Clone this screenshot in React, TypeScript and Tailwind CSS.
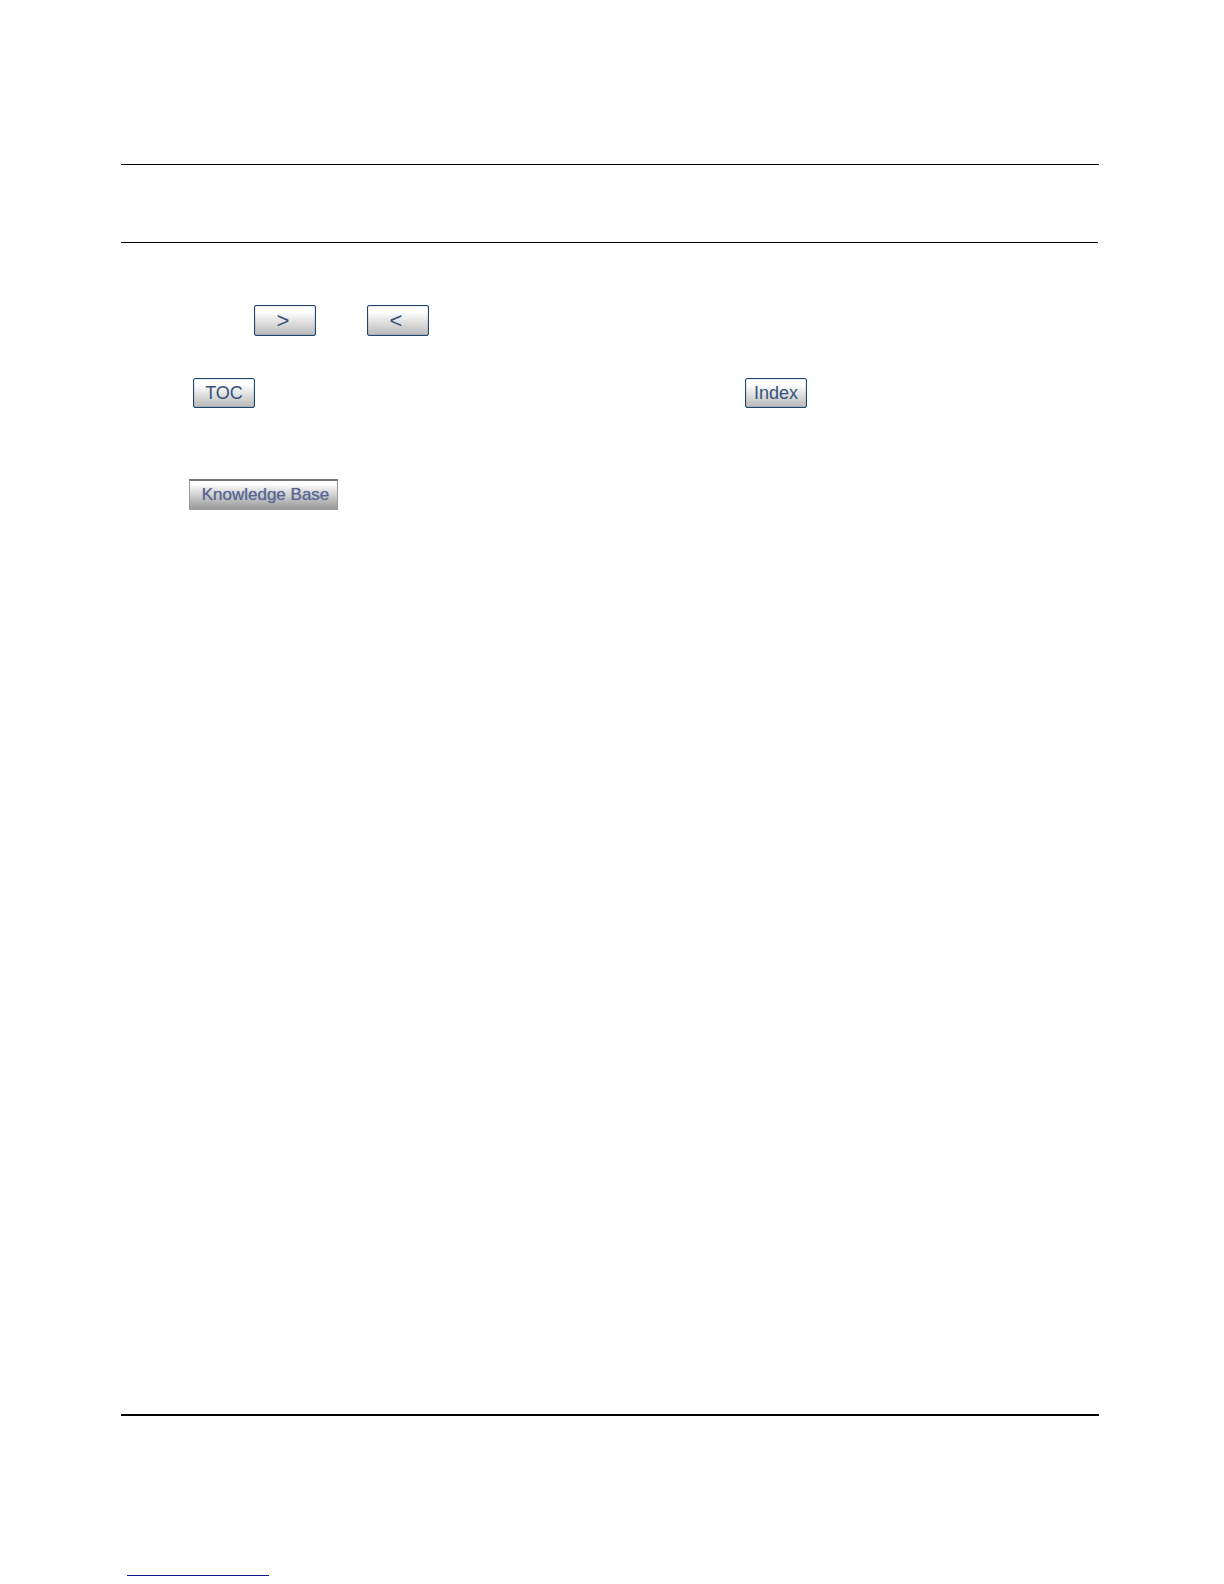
import clsx from "clsx";
import type { ReactNode } from "react";

function NavButton({
  children,
  label,
  className,
}: {
  children: ReactNode;
  label: string;
  className?: string;
}) {
  return (
    <button
      type="button"
      aria-label={label}
      className={clsx(
        "flex w-[62px] items-center justify-center rounded-xs border border-[#1d4670] bg-linear-to-b from-white from-20% to-[#bababa] text-[#355378] shadow-[inset_0_0_1px_#1d4670]",
        className,
      )}
    >
      {children}
    </button>
  );
}

function App() {
  return (
    <div className="min-h-screen bg-white pr-[125px] pl-[121px] font-['Liberation_Sans',Arial,sans-serif]">
      <header className="pt-[164px]">
        <hr className="border-t border-black" />
        <hr className="mt-[77px] mr-px border-t border-black" />
      </header>

      <main className="min-h-[1171px] pt-[62px]">
        <div className="flex gap-[51px] pl-[133px]">
          <NavButton label="Next page" className="h-[31px] pr-1 text-[22px]">
            &gt;
          </NavButton>
          <NavButton label="Previous page" className="h-[31px] pr-1 text-[22px]">
            &lt;
          </NavButton>
        </div>

        <div className="mt-[42px] flex gap-[490px] pl-[72px]">
          <NavButton label="TOC" className="h-[30px] text-[18px]">
            TOC
          </NavButton>
          <NavButton label="Index" className="h-[30px] text-[18px]">
            Index
          </NavButton>
        </div>

        <div className="mt-[71px] pl-[68px]">
          <button
            type="button"
            className="flex h-[31px] w-[149px] items-center justify-center border border-t-2 border-[#999999] border-t-[#777777] bg-linear-to-b from-white from-10% to-[#999999] pl-1 text-[17px] text-[#5b6692] text-shadow-[0_0_1px_#7782aa]"
          >
            Knowledge Base
          </button>
        </div>
      </main>

      <footer>
        <hr className="border-t-2 border-black" />
        <hr className="mt-[159px] ml-[6px] w-[142px] border-t border-[#0f1a8c]" />
      </footer>
    </div>
  );
}

export default App;
